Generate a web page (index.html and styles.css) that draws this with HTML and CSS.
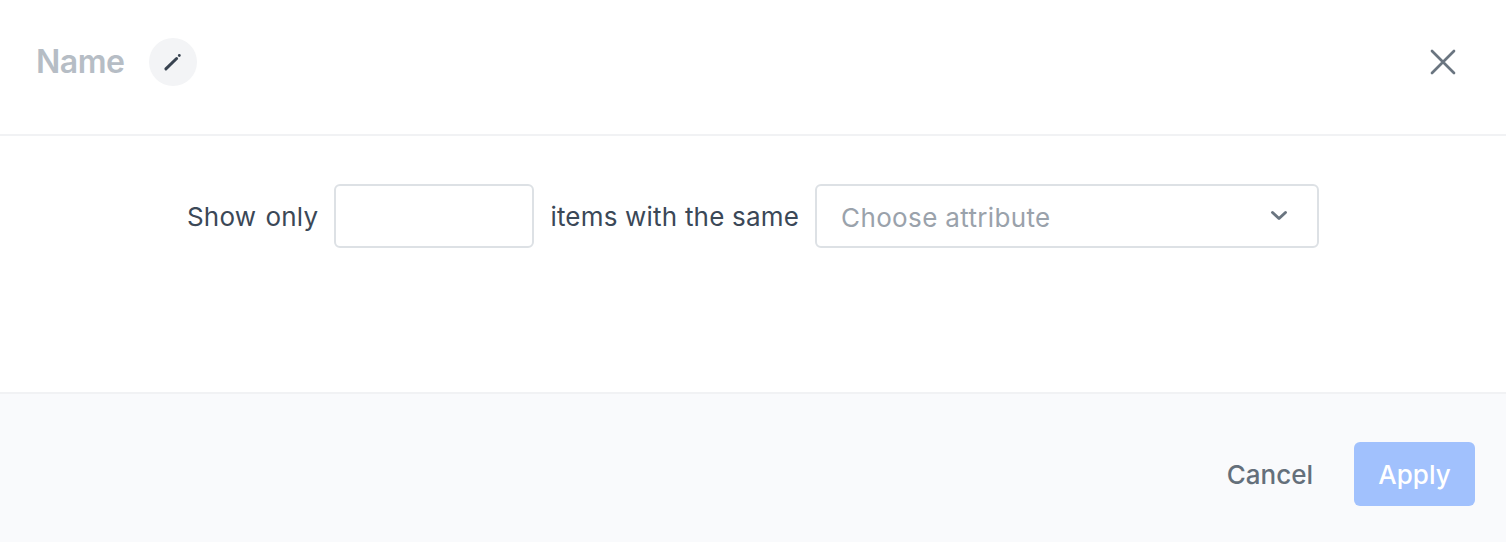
FILE: index.html
```html
<!DOCTYPE html>
<html lang="en">
<head>
<meta charset="utf-8">
<title>Name</title>
<link rel="stylesheet" href="styles.css">
</head>
<body>
<div class="modal">
  <header class="head">
    <div class="title-group">
      <h1 class="title">Name</h1>
      <button class="edit" type="button" aria-label="Edit name">
        <svg width="24" height="24" viewBox="0 0 24 24" aria-hidden="true">
          <path d="M4.9 18.9 15.6 8.5" stroke="#384350" stroke-width="3" stroke-linecap="round" fill="none"/>
          <circle cx="18.3" cy="5.5" r="1.4" fill="#384350"/>
        </svg>
      </button>
    </div>
    <button class="close" type="button" aria-label="Close">
      <svg width="28" height="28" viewBox="0 0 28 28" aria-hidden="true">
        <path d="M3 3 25 25M25 3 3 25" stroke="#6a7580" stroke-width="2.7" stroke-linecap="round" fill="none"/>
      </svg>
    </button>
  </header>
  <main class="content">
    <span class="label label-show">Show only</span>
    <input class="num" type="text" aria-label="Number of items">
    <span class="label label-items">items with the same</span>
    <div class="select">
      <span class="placeholder">Choose attribute</span>
      <svg width="18" height="12" viewBox="0 0 18 12" aria-hidden="true">
        <path d="M2.5 2.5 9 8.5 15.5 2.5" stroke="#6a7580" stroke-width="3" stroke-linecap="round" stroke-linejoin="round" fill="none"/>
      </svg>
    </div>
  </main>
  <footer class="foot">
    <button class="cancel" type="button">Cancel</button>
    <button class="apply" type="button">Apply</button>
  </footer>
</div>
</body>
</html>
```
FILE: styles.css
```css
* { box-sizing: border-box; }
html, body { margin: 0; padding: 0; }
body {
  width: 1506px;
  height: 542px;
  overflow: hidden;
  background: #fff;
  font-family: Inter, "Liberation Sans", sans-serif;
}
.modal { display: flex; flex-direction: column; height: 542px; }
.head {
  height: 136px;
  flex: none;
  display: flex;
  align-items: center;
  justify-content: space-between;
  padding: 0 49px 10px 36px;
  border-bottom: 2px solid #f1f2f4;
}
.title-group { display: flex; align-items: center; gap: 25px; }
.title { margin: 0; font-size: 32px; line-height: 48px; font-weight: 600; color: #b6bdc5; letter-spacing: -0.5px; }
.edit {
  width: 48px;
  height: 48px;
  border: 0;
  padding: 0;
  border-radius: 50%;
  background: #f3f4f6;
  display: flex;
  align-items: center;
  justify-content: center;
}
.close { border: 0; padding: 0; background: none; display: flex; }
.content {
  flex: 1;
  display: flex;
  align-items: flex-start;
  justify-content: center;
  gap: 16px;
  padding: 48px 0 0 0;
}
.label {
  font-size: 26px;
  line-height: 66px;
  color: #3b4857;
  letter-spacing: 0.25px;
  white-space: nowrap;
}
.label-show { word-spacing: 1.5px; }
.label-items { letter-spacing: 0.2px; }
.num {
  width: 200px;
  height: 64px;
  border: 2px solid #dde1e5;
  border-radius: 6px;
  background: #fff;
}
.select {
  width: 504px;
  height: 64px;
  border: 2px solid #dde1e5;
  border-radius: 6px;
  display: flex;
  align-items: center;
  justify-content: space-between;
  padding: 2px 29px 0 24px;
}
.placeholder { font-size: 26px; color: #9aa2ab; letter-spacing: 0.35px; }
.select svg { margin-top: -2px; }
.foot {
  height: 150px;
  flex: none;
  background: #f9fafc;
  border-top: 2px solid #f1f2f4;
  display: flex;
  align-items: flex-start;
  justify-content: flex-end;
  gap: 41px;
  padding: 48px 31px 0 0;
}
.cancel, .apply {
  font-family: inherit;
  font-size: 26px;
  font-weight: 500;
  border: 0;
  height: 64px;
  padding: 0;
}
.cancel { background: none; color: #646f7a; }
.apply { width: 121px; border-radius: 6px; background: #a1c1fd; color: #fff; }
```
